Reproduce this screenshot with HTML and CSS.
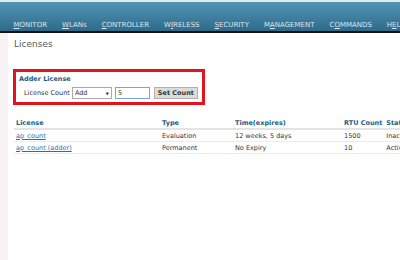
FILE: index.html
```html
<!DOCTYPE html>
<html>
<head>
    <title>Licenses</title>
    <link rel="stylesheet" href="styles.css">
</head>
<body>
    <!-- Top menu -->
    <div class="topbar">
        <ul class="menu">
            <li><u>M</u>ONITOR</li>
            <li><u>W</u>LANs</li>
            <li><u>C</u>ONTROLLER</li>
            <li>W<u>I</u>RELESS</li>
            <li><u>S</u>ECURITY</li>
            <li class="active">M<u>A</u>NAGEMENT</li>
            <li>C<u>O</u>MMANDS</li>
            <li>H<u>E</u>LP</li>
        </ul>
    </div>

    <div class="page">
        <div class="side"></div>
        <div class="content">
            <h1 class="title">Licenses</h1>

            <div class="adder">
                <div class="adder-title">Adder License</div>
                <div class="adder-row">
                    <span class="label">License Count</span>
                    <span class="select">Add<span class="arrow">&#9660;</span></span>
                    <input class="count" type="text" value="5">
                    <button class="set-btn">Set Count</button>
                </div>
            </div>

            <table class="lic-table">
                <tr>
                    <th class="c-lic">License</th>
                    <th class="c-type">Type</th>
                    <th class="c-time">Time(expires)</th>
                    <th class="c-rtu">RTU Count</th>
                    <th class="c-stat">Status</th>
                </tr>
                <tr>
                    <td><a href="#">ap_count</a></td>
                    <td>Evaluation</td>
                    <td>12 weeks, 5 days</td>
                    <td>1500</td>
                    <td>Inactive</td>
                </tr>
                <tr>
                    <td><a href="#">ap_count (adder)</a></td>
                    <td>Permanent</td>
                    <td>No Expiry</td>
                    <td>10</td>
                    <td>Active</td>
                </tr>
            </table>
        </div>
    </div>
</body>
</html>
```

FILE: styles.css
```css
body {
    margin: 0;
    width: 400px;
    height: 260px;
    overflow: hidden;
    font-family: "DejaVu Sans", Verdana, sans-serif;
    background: white;
}

/* Top menu bar */
.topbar {
    border-top: 2px solid #e6eaec;
    height: 29px;
    background: linear-gradient(#5294b4, #2e6b8b);
    border-bottom: 2px solid #111;
    overflow: hidden;
}

.menu {
    list-style: none;
    margin: 0;
    padding: 0 0 0 6px;
    display: flex;
    height: 100%;
    white-space: nowrap;
}

.menu li {
    font-size: 7px;
    color: #dbe6ee;
    padding: 19px 7.5px 0 7.5px;
    margin-bottom: -2px;
    border-bottom: 2px solid transparent;
}

.menu li.active {
    border-bottom-color: #f39a12;
}

.menu u {
    text-decoration-color: #dbe6ee;
}

/* Page */
.page {
    display: flex;
    height: 229px;
}

.side {
    flex: none;
    width: 8px;
    background: #f6f1f3;
}

.content {
    flex: 1;
    min-width: 0;
    overflow: hidden;
    padding: 6px 0 0 6px;
}

.title {
    margin: 0;
    font-size: 9px;
    font-weight: normal;
    color: #5a5a5a;
}

/* Adder box */
.adder {
    margin: 20px 0 0 -1px;
    width: 183px;
    border: 3px solid #e3141d;
    padding: 3px 0 3px 3px;
}

.adder-title {
    font-size: 6.5px;
    font-weight: bold;
    color: #1d5c85;
}

.adder-row {
    display: flex;
    align-items: center;
    margin: 4px 0 0 5px;
    font-size: 6.5px;
    color: #333;
}

.label {
    margin-right: 2px;
}

.select {
    display: flex;
    justify-content: space-between;
    align-items: center;
    width: 34px;
    height: 10px;
    padding: 0 2px;
    border: 1px solid #a9a9a9;
    background: white;
}

.arrow {
    font-size: 4px;
}

.count {
    width: 29px;
    height: 10px;
    margin: 0 0 0 3px;
    padding: 0 2px;
    border: 1px solid #7aa5d6;
    font-family: inherit;
    font-size: 6.5px;
    color: #333;
}

.set-btn {
    margin-left: 4px;
    height: 12px;
    width: 44px;
    padding: 0;
    border: 1px solid #b0b0b0;
    background: #dcdcdc;
    font-family: inherit;
    font-size: 6.5px;
    font-weight: bold;
    color: #333;
}

/* License table */
.lic-table {
    margin-top: 13px;
    width: 420px;
    border-collapse: collapse;
    font-size: 6.5px;
    color: #333;
    white-space: nowrap;
}

.lic-table th {
    text-align: left;
    color: #1d5c85;
    font-weight: bold;
    height: 10px;
    border-bottom: 2px solid #e4e4e4;
    padding: 0 2px;
}

.lic-table td {
    height: 11px;
    border-bottom: 1px solid #ececec;
    padding: 0 2px;
}

.c-lic { width: 142px; }
.c-type { width: 69px; }
.c-time { width: 105px; }
.c-rtu { width: 25px; }

.lic-table a {
    color: #2b6cb8;
}
```
